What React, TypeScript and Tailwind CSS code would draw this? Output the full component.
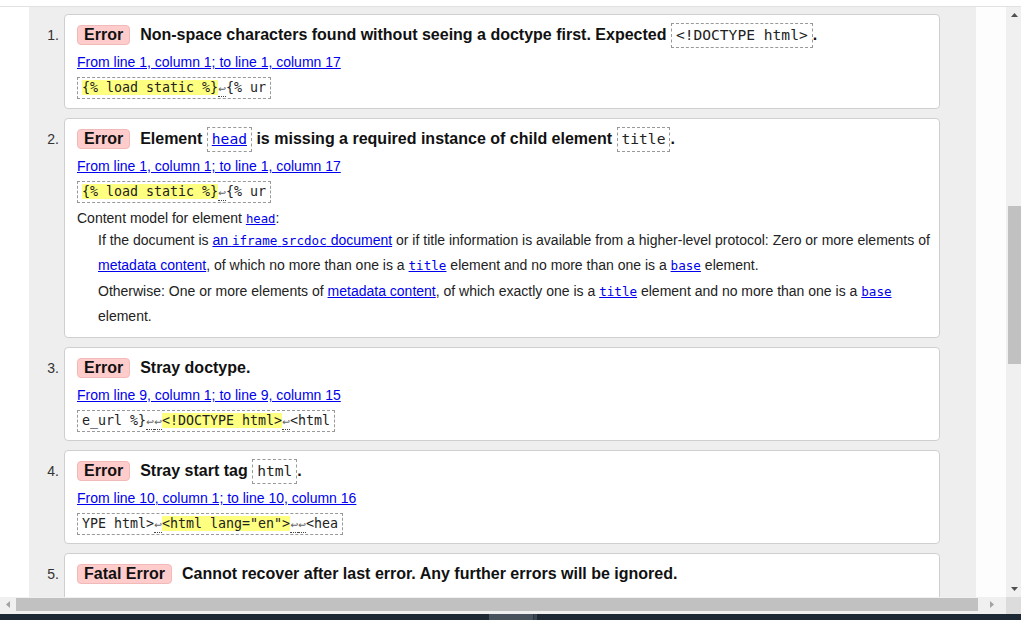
import React from "react";

const LF = () => (
  <span className="inline-block border-b border-dotted border-[#444] font-['DejaVu_Sans',sans-serif] text-[9.5px] leading-[15px] text-[#666]">
    ↩
  </span>
);

const Badge = ({ label }: { label: string }) => (
  <span className="mr-[10px] inline-flex h-[20px] shrink-0 items-center rounded-[4px] border border-[#f2b9b9] bg-[#fcc] px-[6px] text-[16px] font-bold leading-[18px] text-[#111]">
    {label}
  </span>
);

const TCode = ({ children, link }: { children: React.ReactNode; link?: boolean }) => (
  <span className="inline-flex h-[25px] shrink-0 items-center border border-dashed border-[#999] px-[4px] font-['DejaVu_Sans_Mono',monospace] text-[14.6px] font-normal">
    {link ? <a className="text-[#00e] underline">{children}</a> : <span className="text-[#222]">{children}</span>}
  </span>
);

const Loc = ({ text }: { text: string }) => (
  <div className="mt-[5px] h-[20px] text-[14px] leading-[20px]">
    <a className="text-[#00e] underline">{text}</a>
  </div>
);

const Extract = ({ children }: { children: React.ReactNode }) => (
  <div className="mt-[5px] flex">
    <span className="block h-[22px] whitespace-pre border border-dashed border-[#999] px-[4px] font-['DejaVu_Sans_Mono',monospace] text-[13.3px] leading-[20px] text-[#222]">
      {children}
    </span>
  </div>
);

const Hl = ({ children }: { children: React.ReactNode }) => (
  <span className="bg-[#ffff80]">{children}</span>
);

const MLink = ({ children, size = "text-[12.6px]" }: { children: React.ReactNode; size?: string }) => (
  <a className={`font-['DejaVu_Sans_Mono',monospace] ${size} text-[#00e] underline`}>{children}</a>
);

const SLink = ({ children }: { children: React.ReactNode }) => (
  <a className="text-[#00e] underline">{children}</a>
);

const Item = ({ n, pb = "pb-[8px]", children }: { n: number; pb?: string; children: React.ReactNode }) => (
  <div className="flex shrink-0">
    <div className="w-[35px] shrink-0 pr-[5px] pt-[9px] text-right text-[14px] leading-[24px] text-[#333]">{n}.</div>
    <div className={`w-[876px] shrink-0 rounded-[4px] border border-[#cfcfcf] bg-white pl-[12px] pr-[4px] pt-[8px] ${pb}`}>
      {children}
    </div>
  </div>
);

const Title = ({ children }: { children: React.ReactNode }) => (
  <div className="flex h-[24px] items-center whitespace-pre text-[16px] font-bold text-[#111]">{children}</div>
);

export default function App() {
  return (
    <div className="flex h-[620px] w-[1021px] flex-col overflow-hidden bg-white font-['Liberation_Sans',Arial,sans-serif]">
      <div className="h-[6px] shrink-0 bg-white" />
      <div className="h-px shrink-0 bg-[#e2e2e2]" />
      <div className="flex min-h-0 flex-1">
        <div className="w-[29px] shrink-0 bg-white" />
        <div className="w-[947px] shrink-0 overflow-hidden bg-[#eeeeee] pt-[7px]">
          <div className="flex flex-col gap-[9px]">
            <Item n={1} pb="pb-[9px]">
              <Title>
                <Badge label="Error" />
                <span>Non-space characters found without seeing a doctype first. Expected </span>
                <TCode>{"<!DOCTYPE html>"}</TCode>
                <span>.</span>
              </Title>
              <Loc text="From line 1, column 1; to line 1, column 17" />
              <Extract>
                <Hl>{"{% load static %}"}</Hl>
                <LF />
                {"{% ur"}
              </Extract>
            </Item>
            <Item n={2}>
              <Title>
                <Badge label="Error" />
                <span>Element </span>
                <TCode link>head</TCode>
                <span> is missing a required instance of child element </span>
                <TCode>title</TCode>
                <span>.</span>
              </Title>
              <Loc text="From line 1, column 1; to line 1, column 17" />
              <Extract>
                <Hl>{"{% load static %}"}</Hl>
                <LF />
                {"{% ur"}
              </Extract>
              <div className="mt-[5px] h-[20px] whitespace-nowrap text-[14px] leading-[20px] text-[#222]">
                Content model for element <MLink size="text-[12.3px]">head</MLink>:
              </div>
              <div className="pl-[21px] text-[14px] leading-[25px] text-[#222]">
                <div className="whitespace-nowrap">
                  If the document is{" "}
                  <SLink>
                    an <span className="font-['DejaVu_Sans_Mono',monospace] text-[12.6px]">iframe</span>{" "}
                    <span className="font-['DejaVu_Sans_Mono',monospace] text-[12.6px]">srcdoc</span> document
                  </SLink>{" "}
                  or if title information is available from a higher-level protocol: Zero or more elements of
                </div>
                <div className="whitespace-nowrap">
                  <SLink>metadata content</SLink>, of which no more than one is a <MLink>title</MLink> element and no
                  more than one is a <MLink>base</MLink> element.
                </div>
                <div className="mt-px whitespace-nowrap">
                  Otherwise: One or more elements of <SLink>metadata content</SLink>, of which exactly one is a{" "}
                  <MLink>title</MLink> element and no more than one is a <MLink>base</MLink>
                </div>
                <div className="whitespace-nowrap">element.</div>
              </div>
            </Item>
            <Item n={3}>
              <Title>
                <Badge label="Error" />
                <span>Stray doctype.</span>
              </Title>
              <Loc text="From line 9, column 1; to line 9, column 15" />
              <Extract>
                {"e_url %}"}
                <LF />
                <LF />
                <Hl>{"<!DOCTYPE html>"}</Hl>
                <LF />
                {"<html"}
              </Extract>
            </Item>
            <Item n={4}>
              <Title>
                <Badge label="Error" />
                <span>Stray start tag </span>
                <TCode>html</TCode>
                <span>.</span>
              </Title>
              <Loc text="From line 10, column 1; to line 10, column 16" />
              <Extract>
                {"YPE html>"}
                <LF />
                <Hl>{'<html lang="en">'}</Hl>
                <LF />
                <LF />
                {"<hea"}
              </Extract>
            </Item>
            <Item n={5}>
              <Title>
                <Badge label="Fatal Error" />
                <span>Cannot recover after last error. Any further errors will be ignored.</span>
              </Title>
              <div className="h-[40px]" />
            </Item>
          </div>
        </div>
        <div className="w-[30px] shrink-0 bg-[#fdfdfd]" />
        <div className="relative flex w-[15px] shrink-0 flex-col bg-[#f0f0f0]">
          <div className="flex h-[16px] items-center justify-center pl-[2px]">
            <svg width="7" height="4" viewBox="0 0 7 4">
              <polygon points="0,4 7,4 3.5,0" fill="#505050" />
            </svg>
          </div>
          <div className="ml-[2px] mt-[183px] h-[158px] bg-[#c1c1c1]" />
          <div className="flex-1" />
          <div className="flex h-[16px] items-center justify-center pl-[2px]">
            <svg width="7" height="4" viewBox="0 0 7 4">
              <polygon points="0,0 7,0 3.5,4" fill="#505050" />
            </svg>
          </div>
        </div>
      </div>
      <div className="flex h-[17px] shrink-0 bg-[#f0f0f0]">
        <div className="flex w-[16px] items-center justify-center pb-[2px]">
          <svg width="4" height="7" viewBox="0 0 4 7">
            <polygon points="4,0 4,7 0,3.5" fill="#a3a3a3" />
          </svg>
        </div>
        <div className="mt-px h-[13px] w-[962px] bg-[#c1c1c1]" />
        <div className="flex w-[28px] items-center justify-center pb-[2px]">
          <svg width="4" height="7" viewBox="0 0 4 7">
            <polygon points="0,0 0,7 4,3.5" fill="#a3a3a3" />
          </svg>
        </div>
        <div className="flex-1 bg-[#dcdcdc]" />
      </div>
      <div className="flex h-[6px] shrink-0 bg-[#1c2935]">
        <div className="w-[489px]" />
        <div className="w-[44px] bg-[#48525c]" />
        <div className="w-px bg-[#2a3540]" />
        <div className="w-[3px] bg-[#3a444e]" />
      </div>
    </div>
  );
}
